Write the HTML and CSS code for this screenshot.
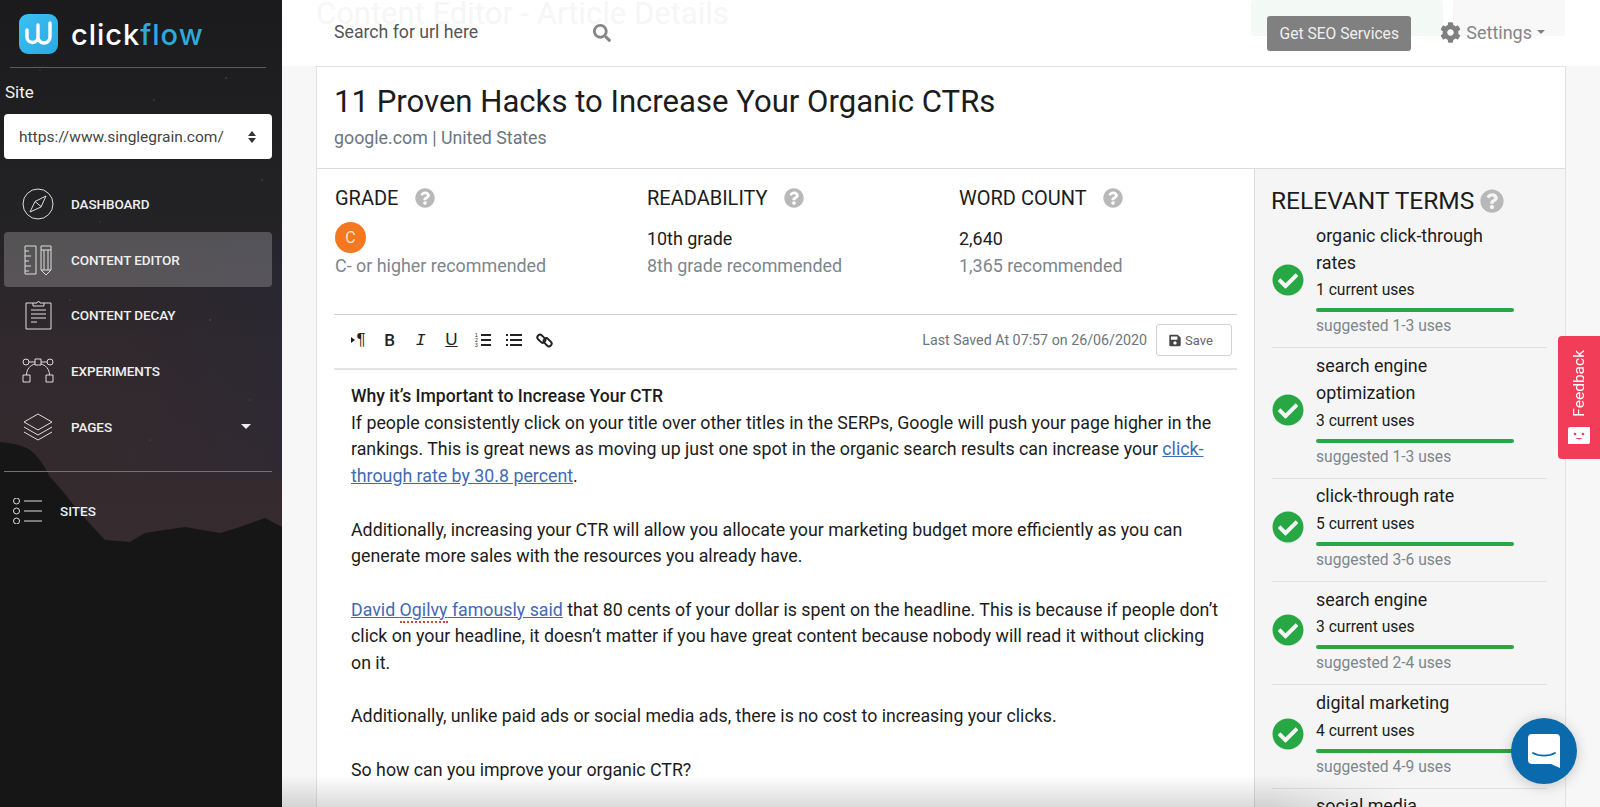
FILE: index.html
```html
<!DOCTYPE html>
<html lang="en">
<head>
  <meta charset="UTF-8" />
  <title>ClickFlow - Content Editor</title>
  <link rel="stylesheet" href="styles.css">
</head>
<body>
  <svg class="icon-defs" width="0" height="0">
    <symbol id="i-help" viewBox="0 0 512 512"><path d="M504 256c0 136.997-111.043 248-248 248S8 392.997 8 256C8 119.083 119.043 8 256 8s248 111.083 248 248zM262.655 90c-54.497 0-89.255 22.957-116.549 63.758-3.536 5.286-2.353 12.415 2.715 16.258l34.699 26.31c5.205 3.947 12.621 3.008 16.665-2.122 17.864-22.658 30.113-35.797 57.303-35.797 20.429 0 45.698 13.148 45.698 32.958 0 14.976-12.363 22.667-32.534 33.976C247.128 238.528 216 254.941 216 296v4c0 6.627 5.373 12 12 12h56c6.627 0 12-5.373 12-12v-1.333c0-28.462 83.186-29.647 83.186-106.667 0-58.002-60.165-102-116.531-102zM256 338c-25.365 0-46 20.635-46 46 0 25.364 20.635 46 46 46s46-20.636 46-46c0-25.365-20.635-46-46-46z"/></symbol>
    <symbol id="i-check" viewBox="0 0 512 512"><path d="M504 256c0 136.967-111.033 248-248 248S8 392.967 8 256 119.033 8 256 8s248 111.033 248 248zM227.314 387.314l184-184c6.248-6.248 6.248-16.379 0-22.627l-22.627-22.627c-6.248-6.249-16.379-6.249-22.628 0L216 308.118l-70.059-70.059c-6.248-6.248-16.379-6.248-22.628 0l-22.627 22.627c-6.248 6.248-6.248 16.379 0 22.627l104 104c6.249 6.249 16.379 6.249 22.628.001z"/></symbol>
  </svg>

  <aside class="sidebar">
    <svg class="sky" viewBox="0 0 282 807" preserveAspectRatio="none">
      <defs>
        <linearGradient id="skyfade" x1="0" y1="0" x2="0" y2="1">
          <stop offset="0" stop-color="#1b1b1d"/>
          <stop offset="0.27" stop-color="#232224"/>
          <stop offset="0.42" stop-color="#30292d"/>
          <stop offset="0.7" stop-color="#372b2f"/>
        </linearGradient>
        <linearGradient id="skyblue" x1="0" y1="0" x2="1" y2="0">
          <stop offset="0.4" stop-color="#24283c" stop-opacity="0"/>
          <stop offset="1" stop-color="#24283c" stop-opacity="0.3"/>
        </linearGradient>
      </defs>
      <rect width="282" height="807" fill="url(#skyfade)"/>
      <rect y="240" width="282" height="240" fill="url(#skyblue)"/>
      <path d="M0 442c12 1 22 3 30 8 8 6 14 15 20 27l10 11 20 25 25 27 25 2 15-9 40-6 35 6 20-6 25-9 17 9v280H0z" fill="#161616"/>
      <g fill="#fff" opacity=".25">
        <circle cx="226" cy="78" r=".8"/><circle cx="154" cy="100" r=".7"/><circle cx="40" cy="70" r=".6"/>
        <circle cx="262" cy="180" r=".7"/><circle cx="100" cy="222" r=".6"/><circle cx="210" cy="320" r=".7"/>
        <circle cx="70" cy="300" r=".6"/><circle cx="250" cy="400" r=".6"/><circle cx="150" cy="440" r=".6"/>
      </g>
    </svg>

    <div class="brand">
      <span class="brand-mark">
        <svg viewBox="0 0 39 40" width="39" height="40"><path d="M8 16v7a5.500 5.500 0 0 0 11 0V11v12a6 6 0 0 0 12 0V9" fill="none" stroke="#fff" stroke-width="3.400" stroke-linecap="round" stroke-linejoin="round"/></svg>
      </span>
      <span class="brand-name">click<span class="brand-blue">flow</span></span>
    </div>

    <div class="site-label">Site</div>
    <div class="site-select">
      <span>https://www.singlegrain.com/</span>
      <span class="updown"><i class="up"></i><i class="down"></i></span>
    </div>

    <nav class="nav">
      <a class="nav-item">
        <span class="nav-icon">
          <svg viewBox="0 0 32 32" width="32" height="32" fill="none" stroke="#ddd" stroke-width="1"><circle cx="16" cy="16" r="15"/><path d="M24 8l-11 5.500L8 24l11-5z M13 13.500l6 5"/></svg>
        </span>
        DASHBOARD
      </a>
      <a class="nav-item active">
        <span class="nav-icon">
          <svg viewBox="0 0 32 32" width="32" height="32" fill="none" stroke="#ddd" stroke-width="1"><path d="M3 2h11v28H3zM3 7h4M3 12h6M3 17h4M3 22h6M3 27h4"/><path d="M19 2h10v24l-5 5-5-5zM19 6h10M22 6v20M26 6v20M19 26h10"/></svg>
        </span>
        CONTENT EDITOR
      </a>
      <a class="nav-item">
        <span class="nav-icon">
          <svg viewBox="0 0 32 32" width="32" height="32" fill="none" stroke="#ddd" stroke-width="1"><path d="M11 4H4v26h25V4h-7"/><path d="M11 7V4h4a1.500 1.500 0 0 1 3 0h4v3zM9 11h15M9 15h15M9 19h15M9 23h6"/></svg>
        </span>
        CONTENT DECAY
      </a>
      <a class="nav-item">
        <span class="nav-icon">
          <svg viewBox="0 0 32 32" width="32" height="32" fill="none" stroke="#ddd" stroke-width="1"><circle cx="4" cy="7" r="3"/><circle cx="28" cy="7" r="3"/><path d="M13 4h6v6h-6zM1 20h7v7H1zM24 20h7v7h-7zM7 7h6M19 7h6M4.500 20c0-6 4-10 8.500-11M27.500 20c0-6-4-10-8.500-11"/></svg>
        </span>
        EXPERIMENTS
      </a>
      <a class="nav-item">
        <span class="nav-icon">
          <svg viewBox="0 0 32 32" width="32" height="32" fill="none" stroke="#ddd" stroke-width="1"><path d="M16 3l14 8-14 8-14-8zM2 16l14 8 14-8M2 21l14 8 14-8"/></svg>
        </span>
        PAGES
        <i class="nav-caret"></i>
      </a>
    </nav>

    <div class="side-rule"></div>

    <a class="sites-link">
      <svg viewBox="0 0 30 26" width="30" height="26" fill="none" stroke="#ddd" stroke-width="1"><circle cx="3.500" cy="3" r="3"/><circle cx="3.500" cy="13" r="3"/><circle cx="3.500" cy="23" r="3"/><path d="M11 3h18M11 13h18M11 23h18"/></svg>
      SITES
    </a>
  </aside>

  <div class="main">
    <header class="topbar">
      <div class="ghost-title">Content Editor - Article Details</div>
      <div class="ghost-btn ghost-green"></div>
      <div class="ghost-btn ghost-grey"></div>

      <div class="search">
        <span>Search for url here</span>
        <svg viewBox="0 0 512 512" width="18" height="18" fill="#868686"><path d="M505 442.700L405.300 343c-4.500-4.500-10.600-7-17-7H372c27.600-35.300 44-79.700 44-128C416 93.100 322.900 0 208 0S0 93.100 0 208s93.100 208 208 208c48.300 0 92.700-16.400 128-44v16.300c0 6.400 2.500 12.500 7 17l99.700 99.700c9.400 9.400 24.600 9.400 33.900 0l28.300-28.300c9.400-9.400 9.400-24.600.1-34zM208 336c-70.700 0-128-57.200-128-128 0-70.700 57.200-128 128-128 70.700 0 128 57.200 128 128 0 70.700-57.200 128-128 128z"/></svg>
      </div>

      <div class="top-actions">
        <a class="seo-btn">Get SEO Services</a>
        <a class="settings">
          <svg viewBox="0 0 512 512" width="21" height="21" fill="#808080"><path d="M487.400 315.700l-42.600-24.600c4.300-23.200 4.300-47 0-70.200l42.600-24.600c4.900-2.800 7.100-8.600 5.500-14-11.100-35.600-30-67.800-54.700-94.600-3.800-4.100-10-5.100-14.800-2.300L380.800 110c-17.900-15.400-38.500-27.300-60.800-35.100V25.800c0-5.600-3.900-10.500-9.400-11.700-36.700-8.200-74.300-7.800-109.200 0-5.500 1.200-9.400 6.100-9.400 11.700V75c-22.200 7.900-42.800 19.800-60.800 35.100L88.700 85.500c-4.900-2.800-11-1.900-14.800 2.300-24.700 26.700-43.600 58.900-54.700 94.600-1.700 5.400.6 11.200 5.500 14L67.300 221c-4.300 23.200-4.300 47 0 70.200l-42.600 24.600c-4.900 2.800-7.100 8.600-5.500 14 11.100 35.600 30 67.800 54.700 94.600 3.800 4.100 10 5.100 14.800 2.300l42.600-24.600c17.900 15.400 38.500 27.300 60.800 35.100v49.200c0 5.600 3.900 10.500 9.400 11.700 36.700 8.200 74.300 7.800 109.200 0 5.500-1.200 9.400-6.100 9.400-11.700v-49.200c22.200-7.900 42.800-19.800 60.800-35.100l42.600 24.600c4.900 2.800 11 1.900 14.800-2.300 24.700-26.700 43.600-58.900 54.700-94.600 1.500-5.500-.7-11.300-5.600-14.100zM256 336c-44.100 0-80-35.900-80-80s35.900-80 80-80 80 35.900 80 80-35.900 80-80 80z"/></svg>
          Settings
          <i class="settings-caret"></i>
        </a>
      </div>
    </header>

    <div class="content">
      <div class="card">
        <div class="card-head">
          <h1>11 Proven Hacks to Increase Your Organic CTRs</h1>
          <div class="card-sub">google.com | United States</div>
        </div>

        <div class="card-body">
          <section class="editor">
            <div class="stats">
              <div class="stat">
                <div class="stat-title">GRADE <svg class="help"><use href="#i-help"/></svg></div>
                <div class="stat-value"><span class="grade">C</span></div>
                <div class="stat-rec">C- or higher recommended</div>
              </div>
              <div class="stat">
                <div class="stat-title">READABILITY <svg class="help"><use href="#i-help"/></svg></div>
                <div class="stat-value">10th grade</div>
                <div class="stat-rec">8th grade recommended</div>
              </div>
              <div class="stat">
                <div class="stat-title">WORD COUNT <svg class="help"><use href="#i-help"/></svg></div>
                <div class="stat-value">2,640</div>
                <div class="stat-rec">1,365 recommended</div>
              </div>
            </div>

            <div class="toolbar">
              <span class="tool tool-para"><i class="para-arrow"></i>¶</span>
              <span class="tool tool-b">B</span>
              <span class="tool tool-i">I</span>
              <span class="tool tool-u">U</span>
              <span class="tool">
                <svg viewBox="0 0 16 16" width="16" height="16"><path d="M6 3h10M6 8h10M6 13h10" stroke="#222" stroke-width="2"/><text x="0" y="5" class="tiny-num">1</text><text x="0" y="10" class="tiny-num">2</text><text x="0" y="15" class="tiny-num">3</text></svg>
              </span>
              <span class="tool">
                <svg viewBox="0 0 16 16" width="16" height="16"><path d="M4 3h12M4 8h12M4 13h12" stroke="#222" stroke-width="2"/><path d="M0 3h2M0 8h2M0 13h2" stroke="#222" stroke-width="2"/></svg>
              </span>
              <span class="tool">
                <svg viewBox="0 0 16 16" width="17" height="17" fill="none" stroke="#222" stroke-width="1.800"><rect x="0.800" y="3.800" width="8.500" height="5" rx="2.500" transform="rotate(45 5 6.300)"/><rect x="6.700" y="7.200" width="8.500" height="5" rx="2.500" transform="rotate(45 11 9.700)"/></svg>
              </span>
              <span class="last-saved">Last Saved At 07:57 on 26/06/2020</span>
              <a class="save-btn">
                <svg viewBox="0 0 448 512" width="12" height="13" fill="#444"><path d="M433.941 129.941l-83.882-83.882A48 48 0 0 0 316.118 32H48C21.490 32 0 53.490 0 80v352c0 26.510 21.490 48 48 48h352c26.510 0 48-21.490 48-48V163.882a48 48 0 0 0-14.059-33.941zM224 416c-35.346 0-64-28.654-64-64 0-35.346 28.654-64 64-64s64 28.654 64 64c0 35.346-28.654 64-64 64zm96-304.520V212c0 6.627-5.373 12-12 12H76c-6.627 0-12-5.373-12-12V108c0-6.627 5.373-12 12-12h228.520c3.183 0 6.235 1.264 8.485 3.515l3.480 3.480A11.996 11.996 0 0 1 320 111.480z"/></svg>
                Save
              </a>
            </div>

            <div class="article">
              <p><strong>Why it’s Important to Increase Your CTR</strong><br>
              If people consistently click on your title over other titles in the SERPs, Google will push your page higher in the rankings. This is great news as moving up just one spot in the organic search results can increase your <a href="#">click-through rate by 30.8 percent</a>.</p>
              <p>Additionally, increasing your CTR will allow you allocate your marketing budget more efficiently as you can generate more sales with the resources you already have.</p>
              <p><a href="#">David <span class="typo">Ogilvy</span> famously said</a> that 80 cents of your dollar is spent on the headline. This is because if people don’t click on your headline, it doesn’t matter if you have great content because nobody will read it without clicking on it.</p>
              <p>Additionally, unlike paid ads or social media ads, there is no cost to increasing your clicks.</p>
              <p>So how can you improve your organic CTR?</p>
            </div>
          </section>

          <section class="terms">
            <h2>RELEVANT TERMS <svg class="help help-lg"><use href="#i-help"/></svg></h2>

            <div class="term">
              <svg class="term-check"><use href="#i-check"/></svg>
              <div class="term-text">
                <div class="term-name">organic click-through rates</div>
                <div class="term-uses">1 current uses</div>
                <div class="term-bar"></div>
                <div class="term-sug">suggested 1-3 uses</div>
              </div>
            </div>
            <div class="term">
              <svg class="term-check"><use href="#i-check"/></svg>
              <div class="term-text">
                <div class="term-name">search engine optimization</div>
                <div class="term-uses">3 current uses</div>
                <div class="term-bar"></div>
                <div class="term-sug">suggested 1-3 uses</div>
              </div>
            </div>
            <div class="term">
              <svg class="term-check"><use href="#i-check"/></svg>
              <div class="term-text">
                <div class="term-name">click-through rate</div>
                <div class="term-uses">5 current uses</div>
                <div class="term-bar"></div>
                <div class="term-sug">suggested 3-6 uses</div>
              </div>
            </div>
            <div class="term">
              <svg class="term-check"><use href="#i-check"/></svg>
              <div class="term-text">
                <div class="term-name">search engine</div>
                <div class="term-uses">3 current uses</div>
                <div class="term-bar"></div>
                <div class="term-sug">suggested 2-4 uses</div>
              </div>
            </div>
            <div class="term">
              <svg class="term-check"><use href="#i-check"/></svg>
              <div class="term-text">
                <div class="term-name">digital marketing</div>
                <div class="term-uses">4 current uses</div>
                <div class="term-bar"></div>
                <div class="term-sug">suggested 4-9 uses</div>
              </div>
            </div>
            <div class="term">
              <svg class="term-check"><use href="#i-check"/></svg>
              <div class="term-text">
                <div class="term-name">social media</div>
                <div class="term-uses">2 current uses</div>
                <div class="term-bar"></div>
                <div class="term-sug">suggested 1-3 uses</div>
              </div>
            </div>
          </section>
        </div>
      </div>
    </div>

    <div class="bottom-fade"></div>
  </div>

  <a class="feedback">
    <span class="feedback-label">Feedback</span>
    <svg viewBox="0 0 22 18" width="22" height="18"><path d="M2 0h20v15a2 2 0 0 1-2 2H0V2a2 2 0 0 1 2-2z" fill="#fff"/><circle cx="7" cy="7" r="1.300" fill="#f23d58"/><circle cx="15" cy="7" r="1.300" fill="#f23d58"/><path d="M7.500 11c2 1.800 5 1.800 7 0" fill="#f23d58"/></svg>
  </a>

  <a class="chat">
    <svg viewBox="0 0 32 34" width="32" height="34"><path d="M4 0h24a4 4 0 0 1 4 4v30l-9-4H4a4 4 0 0 1-4-4V4a4 4 0 0 1 4-4z" fill="#fff"/><path d="M5 19c6 3.500 16 3.500 22 0" fill="none" stroke="#0a6aab" stroke-width="1.800" stroke-linecap="round"/></svg>
  </a>
</body>
</html>
```

FILE: styles.css
```css
* {
  box-sizing: border-box;
}

html, body {
  height: 100%;
}

body {
  margin: 0;
  display: flex;
  height: 807px;
  overflow: hidden;
  font-family: Roboto, "Liberation Sans", sans-serif;
  color: #212529;
  background: #f7f7f7;
}

.icon-defs {
  position: absolute;
}

/* sidebar */
.sidebar {
  position: relative;
  flex: 0 0 282px;
  height: 807px;
  padding: 0 10px 0 4px;
  color: #f2f2f2;
  overflow: hidden;
}

.sky {
  position: absolute;
  top: 0;
  left: 0;
  width: 282px;
  height: 807px;
  z-index: -1;
}

.brand {
  display: flex;
  align-items: center;
  height: 68px;
  margin: 0 6px 0 6px;
  padding: 0 0 0 9px;
  gap: 13px;
  border-bottom: 1px solid #5c5c5e;
}

.brand-mark {
  width: 39px;
  height: 40px;
  border-radius: 9px;
  background: linear-gradient(135deg, #3cc0f2, #2aa9e4);
  display: block;
}

.brand-mark svg {
  display: block;
}

.brand-name {
  margin-top: 3px;
  font-family: Inter, Lato, sans-serif;
  font-size: 29px;
  font-weight: 500;
  letter-spacing: 1px;
  color: #fff;
  line-height: 40px;
}

.brand-blue {
  color: #2fa8dc;
}

.site-label {
  margin: 12px 0 0 1px;
  font-size: 17px;
  line-height: 24px;
}

.site-select {
  display: flex;
  align-items: center;
  justify-content: space-between;
  height: 45px;
  margin-top: 10px;
  padding: 0 16px 0 15px;
  background: #fff;
  border-radius: 4px;
  color: #444;
  font-size: 15.5px;
}

.updown {
  display: flex;
  flex-direction: column;
  gap: 2px;
}

.updown i {
  display: block;
  width: 0;
  height: 0;
  border-left: 4.5px solid transparent;
  border-right: 4.5px solid transparent;
}

.updown .up {
  border-bottom: 5px solid #333;
}

.updown .down {
  border-top: 5px solid #333;
}

.nav {
  margin-top: 17px;
}

.nav-item {
  display: flex;
  align-items: center;
  height: 55.7px;
  padding: 0 21px 0 18px;
  border-radius: 4px;
  font-size: 13.5px;
  font-weight: 500;
  letter-spacing: -0.1px;
  color: #efefef;
}

.nav-item.active {
  background: rgba(255, 255, 255, 0.22);
}

.nav-icon {
  display: flex;
  flex: 0 0 49px;
}

.nav-caret {
  margin-left: auto;
  width: 0;
  height: 0;
  border-left: 5px solid transparent;
  border-right: 5px solid transparent;
  border-top: 5px solid #eee;
}

.side-rule {
  height: 1px;
  margin-top: 17px;
  background: #77706f;
}

.sites-link {
  display: flex;
  align-items: center;
  gap: 17px;
  margin: 26px 0 0 9px;
  font-size: 13.5px;
  font-weight: 500;
  color: #efefef;
}

/* main */
.main {
  position: relative;
  flex: 1;
  min-width: 0;
  height: 807px;
}

.topbar {
  position: relative;
  display: flex;
  align-items: center;
  justify-content: space-between;
  height: 66px;
  padding: 0 55px 2px 52px;
  background: #fff;
  overflow: hidden;
}

.ghost-title {
  position: absolute;
  top: -4px;
  left: 34px;
  font-size: 31px;
  line-height: 36px;
  color: #f6f6f6;
}

.ghost-btn {
  position: absolute;
  top: 0;
  height: 36px;
  border-radius: 3px;
}

.ghost-green {
  left: 969px;
  width: 192px;
  background: #f3faf5;
}

.ghost-grey {
  left: 1171px;
  width: 112px;
  background: #f8f8f8;
}

.search {
  position: relative;
  display: flex;
  align-items: center;
  gap: 115px;
  font-size: 17.7px;
  color: #555;
}

.search svg {
  margin-top: 2px;
}

.top-actions {
  position: relative;
  display: flex;
  align-items: center;
  gap: 29px;
}

.seo-btn {
  display: block;
  width: 144px;
  height: 35px;
  margin-top: 2px;
  line-height: 37px;
  text-align: center;
  background: #808080;
  border-radius: 3px;
  color: #f0f0f0;
  font-size: 15.6px;
}

.settings {
  display: flex;
  align-items: center;
  gap: 5px;
  font-size: 18px;
  color: #868686;
}

.settings-caret {
  width: 0;
  height: 0;
  border-left: 4.5px solid transparent;
  border-right: 4.5px solid transparent;
  border-top: 4.5px solid #808080;
}

.content {
  padding: 0 34px;
}

.card {
  background: #fff;
  border: 1px solid #e2e2e2;
  border-bottom: 0;
}

.card-head {
  height: 102px;
  padding: 15px 17px 0;
  border-bottom: 1px solid #dcdcdc;
}

.card-head h1 {
  margin: 0 0 4px;
  font-size: 31.1px;
  line-height: 40px;
  font-weight: 400;
  color: #1c1c1c;
}

.card-sub {
  font-size: 17.8px;
  line-height: 24px;
  color: #6c757d;
}

.card-body {
  display: flex;
}

.editor {
  flex: 0 0 937px;
  min-width: 0;
  padding: 0 17px;
}

.stats {
  display: grid;
  grid-template-columns: 312px 312px 1fr;
  height: 146px;
  padding: 15px 0 0 1px;
  border-bottom: 1px solid #cfcfcf;
}

.stat-title {
  display: flex;
  align-items: center;
  gap: 16px;
  font-size: 20px;
  line-height: 28px;
  color: #1c1c1c;
}

.help {
  width: 20px;
  height: 20px;
  fill: #b8b8b8;
}

.stat-value {
  height: 31px;
  margin-top: 10px;
  font-size: 17.9px;
  line-height: 34px;
  color: #1c1c1c;
}

.grade {
  display: block;
  width: 31px;
  height: 31px;
  line-height: 31px;
  text-align: center;
  border-radius: 50%;
  background: #f5771f;
  color: #fbe3d2;
  font-size: 16px;
}

.stat-rec {
  font-size: 17.9px;
  line-height: 26px;
  color: #7d868d;
}

.toolbar {
  display: flex;
  align-items: center;
  height: 55px;
  padding: 0 5px 3px 9px;
  border-bottom: 2px solid #e4e4e4;
}

.tool {
  display: flex;
  align-items: center;
  justify-content: center;
  width: 31px;
  font-family: "Liberation Sans", sans-serif;
  font-size: 17px;
  color: #222;
}

.tool-b {
  font-family: Roboto, sans-serif;
  font-weight: 500;
  font-size: 17px;
}

.tool-i {
  font-family: "Liberation Mono", monospace;
  font-style: italic;
}

.tool-u {
  text-decoration: underline;
}

.para-arrow {
  width: 0;
  height: 0;
  margin-right: 1px;
  border-top: 3.5px solid transparent;
  border-bottom: 3.5px solid transparent;
  border-left: 4px solid #222;
}

.tiny-num {
  font-family: "Liberation Sans", sans-serif;
  font-size: 5px;
  fill: #222;
}

.last-saved {
  margin-left: auto;
  font-size: 14.25px;
  color: #6c757d;
}

.save-btn {
  display: flex;
  align-items: center;
  gap: 4px;
  width: 76px;
  height: 32px;
  margin-left: 9px;
  padding-left: 12px;
  border: 1px solid #d2d2d2;
  border-radius: 3px;
  font-size: 13px;
  color: #666;
}

.article {
  padding: 13px 14px 0 17px;
  font-size: 17.8px;
  line-height: 26.7px;
  color: #1c1c1c;
}

.article p {
  margin: 0 0 26.7px;
}

.article strong {
  font-size: 17.6px;
  font-weight: 500;
}

.article a {
  color: #3f6ab5;
  text-decoration: underline;
}

.typo {
  padding-bottom: 1px;
  border-bottom: 2px dotted #d0483f;
}

.terms {
  flex: 1;
  min-width: 0;
  padding: 0 18px 0 17px;
  background: #f5f5f5;
  border-left: 1px solid #dcdcdc;
  height: 638px;
  overflow: hidden;
}

.terms h2 {
  display: flex;
  align-items: center;
  gap: 6px;
  margin: 0 0 0 -1px;
  padding-top: 10px;
  height: 53px;
  font-size: 24.5px;
  line-height: 32px;
  font-weight: 400;
  color: #1c1c1c;
}

.help-lg {
  width: 24px;
  height: 24px;
}

.term {
  display: flex;
  align-items: center;
  gap: 12px;
  padding: 1px 0 10px;
  margin-bottom: 3.7px;
  border-bottom: 1px solid #e0e0e0;
}

.term-check {
  flex: 0 0 32px;
  height: 32px;
  fill: #28a745;
}

.term-text {
  width: 198px;
}

.term-name {
  font-size: 17.9px;
  line-height: 26.7px;
  color: #1c1c1c;
}

.term-uses {
  height: 26px;
  font-size: 15.6px;
  line-height: 29px;
  color: #1c1c1c;
}

.term-bar {
  height: 4px;
  margin-top: 6px;
  border-radius: 2px;
  background: #28a745;
}

.term-sug {
  height: 22px;
  margin-top: 3px;
  font-size: 15.6px;
  line-height: 22px;
  color: #7d868d;
}

.bottom-fade {
  position: absolute;
  left: 0;
  right: 0;
  bottom: 0;
  height: 32px;
  background: linear-gradient(to bottom, rgba(0, 0, 0, 0), rgba(0, 0, 0, 0.14));
  -webkit-mask-image: linear-gradient(to right, #000 75%, transparent 85%);
  mask-image: linear-gradient(to right, #000 75%, transparent 85%);
}

/* floating widgets */
.feedback {
  position: absolute;
  top: 336px;
  right: 0;
  display: flex;
  flex-direction: column;
  align-items: center;
  justify-content: space-between;
  width: 42px;
  height: 123px;
  padding: 14px 0 14px;
  background: #f23d58;
  border-radius: 4px 0 0 4px;
}

.feedback-label {
  writing-mode: vertical-rl;
  transform: rotate(180deg);
  font-size: 15.5px;
  color: #fff;
}

.chat {
  position: absolute;
  left: 1511px;
  top: 718px;
  display: flex;
  align-items: center;
  justify-content: center;
  width: 66px;
  height: 66px;
  border-radius: 50%;
  background: #0a6aab;
  box-shadow: 0 2px 14px rgba(0, 0, 0, 0.2);
}
```
